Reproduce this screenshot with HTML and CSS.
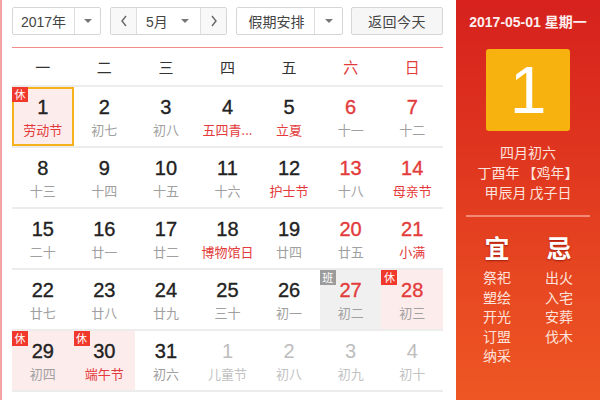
FILE: index.html
```html
<!DOCTYPE html>
<html lang="zh-CN">
<head>
<meta charset="utf-8">
<link rel="stylesheet" href="styles.css">
</head>
<body>
<div class="cal">
  <div class="main">
    <div class="bar">
      <div class="sel year"><span class="val">2017年</span><span class="drop"><i class="tri"></i></span></div>
      <div class="month">
        <span class="nav"><svg width="8" height="12" viewBox="0 0 8 12"><polyline points="6,1 2,6 6,11" fill="none" stroke="#666" stroke-width="1.4"/></svg></span>
        <span class="mval"><span>5月</span><i class="tri"></i></span>
        <span class="nav"><svg width="8" height="12" viewBox="0 0 8 12"><polyline points="2,1 6,6 2,11" fill="none" stroke="#666" stroke-width="1.4"/></svg></span>
      </div>
      <div class="sel hol"><span class="val">假期安排</span><span class="drop"><i class="tri"></i></span></div>
      <div class="today">返回今天</div>
    </div>
    <div class="head">
      <span>一</span><span>二</span><span>三</span><span>四</span><span>五</span><span class="we">六</span><span class="we">日</span>
    </div>
    <div class="weeks">
      <div class="week">
        <div class="day rest sel-day"><i class="badge">休</i><b>1</b><em class="fest">劳动节</em></div>
        <div class="day"><b>2</b><em>初七</em></div>
        <div class="day"><b>3</b><em>初八</em></div>
        <div class="day"><b>4</b><em class="fest">五四青...</em></div>
        <div class="day"><b>5</b><em class="fest">立夏</em></div>
        <div class="day we"><b>6</b><em>十一</em></div>
        <div class="day we"><b>7</b><em>十二</em></div>
      </div>
      <div class="week">
        <div class="day"><b>8</b><em>十三</em></div>
        <div class="day"><b>9</b><em>十四</em></div>
        <div class="day"><b>10</b><em>十五</em></div>
        <div class="day"><b>11</b><em>十六</em></div>
        <div class="day"><b>12</b><em class="fest">护士节</em></div>
        <div class="day we"><b>13</b><em>十八</em></div>
        <div class="day we"><b>14</b><em class="fest">母亲节</em></div>
      </div>
      <div class="week">
        <div class="day"><b>15</b><em>二十</em></div>
        <div class="day"><b>16</b><em>廿一</em></div>
        <div class="day"><b>17</b><em>廿二</em></div>
        <div class="day"><b>18</b><em class="fest">博物馆日</em></div>
        <div class="day"><b>19</b><em>廿四</em></div>
        <div class="day we"><b>20</b><em>廿五</em></div>
        <div class="day we"><b>21</b><em class="fest">小满</em></div>
      </div>
      <div class="week">
        <div class="day"><b>22</b><em>廿七</em></div>
        <div class="day"><b>23</b><em>廿八</em></div>
        <div class="day"><b>24</b><em>廿九</em></div>
        <div class="day"><b>25</b><em>三十</em></div>
        <div class="day"><b>26</b><em>初一</em></div>
        <div class="day we work"><i class="badge gray">班</i><b>27</b><em>初二</em></div>
        <div class="day we rest"><i class="badge">休</i><b>28</b><em>初三</em></div>
      </div>
      <div class="week">
        <div class="day rest"><i class="badge">休</i><b>29</b><em>初四</em></div>
        <div class="day rest"><i class="badge">休</i><b>30</b><em class="fest">端午节</em></div>
        <div class="day"><b>31</b><em>初六</em></div>
        <div class="day other"><b>1</b><em>儿童节</em></div>
        <div class="day other"><b>2</b><em>初八</em></div>
        <div class="day other"><b>3</b><em>初九</em></div>
        <div class="day other"><b>4</b><em>初十</em></div>
      </div>
    </div>
  </div>
  <div class="side">
    <div class="date">2017-05-01 星期一</div>
    <div class="big">1</div>
    <div class="lunar">
      <div>四月初六</div>
      <div>丁酉年 【鸡年】</div>
      <div>甲辰月 戊子日</div>
    </div>
    <div class="yiji">
      <div class="col">
        <div class="ttl">宜</div>
        <div>祭祀</div><div>塑绘</div><div>开光</div><div>订盟</div><div>纳采</div>
      </div>
      <div class="col">
        <div class="ttl">忌</div>
        <div>出火</div><div>入宅</div><div>安葬</div><div>伐木</div>
      </div>
    </div>
  </div>
</div>
</body>
</html>
```

FILE: styles.css
```css
* { box-sizing: border-box; }
html, body { margin: 0; padding: 0; background: #fff; }
body {
  font-family: "Liberation Sans", "Noto Sans CJK SC", sans-serif;
  color: #333;
  width: 600px;
  height: 400px;
  overflow: hidden;
}
.cal { display: flex; width: 600px; height: 400px; }
.main {
  width: 456px;
  border-left: 2px solid #f3a3a3;
  padding: 7px 13px 0 10px;
}
.bar { display: flex; height: 28px; font-size: 14px; color: #444; }
.sel, .month, .today {
  display: flex;
  border: 1px solid #d6d6d6;
  border-radius: 2px;
  height: 28px;
  background: #fff;
}
.year { width: 89px; }
.month { width: 117px; margin-left: 9px; }
.hol { width: 107px; margin-left: 9px; }
.today {
  width: 92px; margin-left: 8px;
  background: #f6f6f6;
  justify-content: center; align-items: center;
  letter-spacing: 0.5px;
}
.val { flex: 1; display: flex; align-items: center; justify-content: center; }
.drop {
  width: 26px; border-left: 1px solid #dedede;
  display: flex; align-items: center; justify-content: center;
}
.hol .drop { width: 28px; }
.hol .val { padding-left: 2px; }
.tri {
  display: block; width: 0; height: 0;
  border-left: 4px solid transparent;
  border-right: 4px solid transparent;
  border-top: 4px solid #777;
}
.nav {
  width: 25px; display: flex; align-items: center; justify-content: center;
  background: #f8f8f8;
}
.mval {
  flex: 1; border-left: 1px solid #dedede; border-right: 1px solid #dedede;
  display: flex; align-items: center; justify-content: space-between;
  padding: 0 11px 0 9px;
}
.head {
  margin-top: 12px;
  border-top: 1px solid #f28a8a;
  display: grid; grid-template-columns: repeat(7, 1fr);
  height: 38px; line-height: 37px;
  font-size: 15px; text-align: center; color: #333;
  font-family: "Noto Sans CJK SC", sans-serif;
}
.head .we { color: #e33b3b; }
.weeks { border-top: 2px solid #ececec; }
.week {
  display: grid; grid-template-columns: repeat(7, 1fr);
  height: 61px; border-bottom: 2px solid #ececec;
}
.day {
  position: relative;
  text-align: center;
  padding-top: 9px;
}
.day b {
  display: block;
  font-weight: normal;
  font-size: 20px; line-height: 22px;
  color: #222;
  -webkit-text-stroke: 0.35px currentColor;
}
.day em {
  display: block; font-style: normal;
  font-size: 13px; line-height: 18px; margin-top: 3px;
  color: #a0a0a0;
  font-family: "Noto Sans CJK SC", sans-serif;
  white-space: nowrap;
}
.day em.fest { color: #e33b3b; }
.day.we b { color: #e33b3b; }
.day.rest { background: #fdecec; }
.day.work { background: #f0f0f0; }
.day.other b { color: #bdbdbd; -webkit-text-stroke: 0; }
.day.other em { color: #c2c2c2; }
.sel-day { border: 2px solid #f6b21b; padding-top: 7px; }
.badge {
  position: absolute; top: 0; left: 0;
  width: 16px; height: 15px;
  background: #f0382c; color: #fff;
  font-style: normal; font-size: 11px; line-height: 15px;
  text-align: center;
  font-family: "Noto Sans CJK SC", sans-serif;
}
.sel-day .badge { top: -2px; left: -2px; }
.badge.gray { background: #9c9c9c; }
.side {
  width: 144px;
  background: linear-gradient(#d6211d, #ee5723);
  color: #fff;
  padding: 12px 10px 0 10px;
  text-align: center;
}
.date { font-size: 14px; font-weight: bold; line-height: 20px; color: #fdeeee; }
.big {
  width: 84px; height: 82px; margin: 17px auto 0 auto;
  background: #f7b20f; border-radius: 3px;
  font-size: 66px; line-height: 82px; color: #fff;
}
.lunar {
  margin-top: 11px;
  font-size: 14px; line-height: 20px; color: #fde3dc;
  font-family: "Noto Sans CJK SC", sans-serif;
  padding-bottom: 13px;
  border-bottom: 2px solid rgba(255, 200, 190, 0.55);
}
.yiji {
  display: grid; grid-template-columns: 1fr 1fr;
  font-family: "Noto Sans CJK SC", sans-serif;
  font-size: 14px; line-height: 19.5px; color: #fde3dc;
  padding-top: 14px;
}
.yiji .ttl {
  font-size: 25px; font-weight: bold; line-height: 32px;
  color: #fff; margin-bottom: 5px;
  text-shadow: 0 1px 2px rgba(120, 0, 0, 0.6);
}
```
